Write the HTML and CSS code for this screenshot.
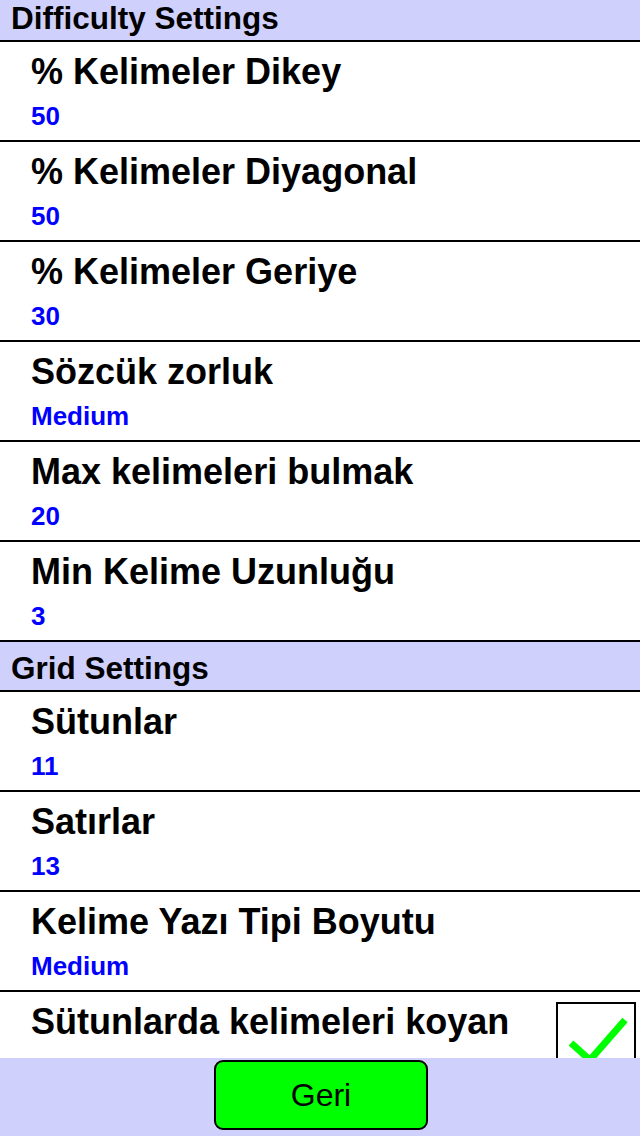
FILE: index.html
```
<!DOCTYPE html>
<html lang="tr">
<head>
    <meta charset="UTF-8">
    <meta name="viewport" content="width=device-width, initial-scale=1.0">
    <title>Settings</title>
    <link rel="stylesheet" href="styles.css">
</head>
<body>
    <div id="list">
        <div class="section-header first">Difficulty Settings</div>
        <div class="row">
            <div class="row-title">% Kelimeler Dikey</div>
            <div class="row-value">50</div>
        </div>
        <div class="row">
            <div class="row-title">% Kelimeler Diyagonal</div>
            <div class="row-value">50</div>
        </div>
        <div class="row">
            <div class="row-title">% Kelimeler Geriye</div>
            <div class="row-value">30</div>
        </div>
        <div class="row">
            <div class="row-title">Sözcük zorluk</div>
            <div class="row-value">Medium</div>
        </div>
        <div class="row">
            <div class="row-title">Max kelimeleri bulmak</div>
            <div class="row-value">20</div>
        </div>
        <div class="row">
            <div class="row-title">Min Kelime Uzunluğu</div>
            <div class="row-value">3</div>
        </div>
        <div class="section-header">Grid Settings</div>
        <div class="row">
            <div class="row-title">Sütunlar</div>
            <div class="row-value">11</div>
        </div>
        <div class="row">
            <div class="row-title">Satırlar</div>
            <div class="row-value">13</div>
        </div>
        <div class="row">
            <div class="row-title">Kelime Yazı Tipi Boyutu</div>
            <div class="row-value">Medium</div>
        </div>
        <div class="row check-row">
            <div class="row-title">Sütunlarda kelimeleri koyan</div>
            <div class="checkbox">
                <svg width="76" height="76" viewBox="0 0 76 76">
                    <polyline points="13,39 32,56 67,16" fill="none" stroke="#00ff00" stroke-width="7"/>
                </svg>
            </div>
        </div>
    </div>
    <div id="footer">
        <button id="back-button">Geri</button>
    </div>
</body>
</html>
```

FILE: styles.css
```
body {
    display: flex;
    flex-direction: column;
    height: 100vh;
    margin: 0;
    font-family: "Liberation Sans", Arial, sans-serif;
    background: #fff;
}

#list {
    flex: 1;
    overflow: hidden;
}

.section-header {
    height: 44px;
    padding-left: 11px;
    padding-top: 4px;
    line-height: 44px;
    font-size: 31.5px;
    font-weight: bold;
    background-color: #d0d0fc;
    border-bottom: 2px solid #000;
}

/* list is scrolled a little, first header is cut at the top */
.section-header.first {
    margin-top: -8px;
}

.row {
    height: 88px;
    padding: 10px 0 0 31px;
    border-bottom: 2px solid #000;
}

.row-title {
    font-size: 36px;
    font-weight: bold;
    line-height: 40px;
    color: #000;
}

.row-value {
    margin-top: 10px;
    font-size: 26px;
    font-weight: bold;
    line-height: 28px;
    color: #0000ff;
}

.check-row {
    display: flex;
    justify-content: space-between;
}

.checkbox {
    width: 76px;
    height: 76px;
    margin-right: 4px;
    border: 2px solid #000;
    background: #fff;
}

.checkbox svg {
    display: block;
}

#footer {
    height: 78px;
    display: flex;
    justify-content: center;
    align-items: flex-start;
    padding-top: 2px;
    box-sizing: border-box;
    background-color: #d0d0fc;
}

#back-button {
    width: 214px;
    height: 70px;
    margin-left: 2px;
    background-color: #00ff00;
    border: 2px solid #000;
    border-radius: 9px;
    font-family: "Liberation Sans", Arial, sans-serif;
    font-size: 32px;
    color: #000;
    cursor: pointer;
}
```
